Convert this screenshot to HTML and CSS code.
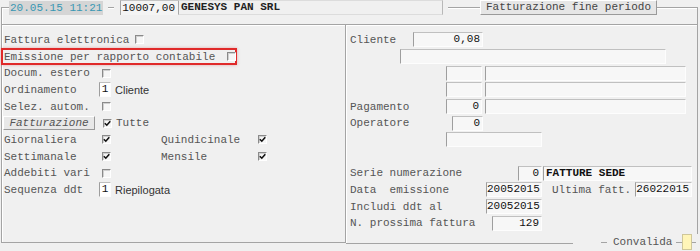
FILE: index.html
```html
<!DOCTYPE html>
<html lang="it">
<head>
    <meta charset="UTF-8">
    <title>Fatturazione fine periodo</title>
    <link rel="stylesheet" href="styles.css">
</head>
<body>
    <div class="window">
        <div class="head">
            <div class="head-row">
                <span class="line w8"></span>
                <span class="date">20.05.15 11:21</span>
                <span class="hide w5"></span><span class="line w6"></span><span class="hide w6"></span>
                <span class="amount">10007,00</span>
                <span class="name">GENESYS PAN SRL</span>
                <span class="hide w5"></span>
                <span class="line w32"></span>
                <span class="title-btn">Fatturazione fine periodo</span>
                <span class="line grow"></span>
            </div>
        </div>

        <div class="panels">
            <div class="panel left">
                <div class="row"><span class="lbl auto">Fattura elettronica</span><span class="cb gap6"></span></div>
                <div class="row mark"><span class="lbl auto">Emissione per rapporto contabile</span><span class="cb gap12"></span></div>
                <div class="row"><span class="lbl">Docum. estero</span><span class="cb"></span></div>
                <div class="row"><span class="lbl short">Ordinamento</span><span class="fld one">1</span><span class="note">Cliente</span></div>
                <div class="row"><span class="lbl">Selez. autom.</span><span class="cb"></span></div>
                <div class="row">
                    <span class="btn">Fatturazione</span>
                    <span class="cb on gap8"><svg viewBox="0 0 7 7" width="7" height="7"><path d="M0.8 3.2 L2.8 5.2 L6.3 1.2" fill="none" stroke="#111" stroke-width="1.6"/></svg></span>
                    <span class="lbl auto gap4">Tutte</span>
                </div>
                <div class="row">
                    <span class="lbl">Giornaliera</span>
                    <span class="cb on"><svg viewBox="0 0 7 7" width="7" height="7"><path d="M0.8 3.2 L2.8 5.2 L6.3 1.2" fill="none" stroke="#111" stroke-width="1.6"/></svg></span>
                    <span class="lbl col2">Quindicinale</span>
                    <span class="cb on"><svg viewBox="0 0 7 7" width="7" height="7"><path d="M0.8 3.2 L2.8 5.2 L6.3 1.2" fill="none" stroke="#111" stroke-width="1.6"/></svg></span>
                </div>
                <div class="row">
                    <span class="lbl">Settimanale</span>
                    <span class="cb on"><svg viewBox="0 0 7 7" width="7" height="7"><path d="M0.8 3.2 L2.8 5.2 L6.3 1.2" fill="none" stroke="#111" stroke-width="1.6"/></svg></span>
                    <span class="lbl col2">Mensile</span>
                    <span class="cb on"><svg viewBox="0 0 7 7" width="7" height="7"><path d="M0.8 3.2 L2.8 5.2 L6.3 1.2" fill="none" stroke="#111" stroke-width="1.6"/></svg></span>
                </div>
                <div class="row"><span class="lbl">Addebiti vari</span><span class="cb"></span></div>
                <div class="row"><span class="lbl short">Sequenza ddt</span><span class="fld one">1</span><span class="note">Riepilogata</span></div>
            </div>

            <div class="panel right">
                <div class="row"><span class="lbl r-cli">Cliente</span><span class="fld w70">0,08</span></div>
                <div class="row"><span class="lbl r-50"></span><span class="fld w266"></span></div>
                <div class="row"><span class="lbl r-96"></span><span class="fld w36"></span><span class="fld w201 gap3"></span></div>
                <div class="row"><span class="lbl r-96"></span><span class="fld w36"></span><span class="fld w201 gap3"></span></div>
                <div class="row"><span class="lbl r-96">Pagamento</span><span class="fld w36">0</span><span class="fld w201 gap3"></span></div>
                <div class="row"><span class="lbl r-102">Operatore</span><span class="fld w31">0</span></div>
                <div class="row"><span class="lbl r-96"></span><span class="fld w96"></span></div>
                <div class="row"></div>
                <div class="row"><span class="lbl r-168">Serie numerazione</span><span class="fld w24">0</span><span class="fld w149 gap1 text">FATTURE SEDE</span></div>
                <div class="row">
                    <span class="lbl r-136">Data  emissione</span><span class="fld w56">20052015</span>
                    <span class="lbl r-ult">Ultima fatt.</span><span class="fld w57">26022015</span>
                </div>
                <div class="row"><span class="lbl r-136">Includi ddt al</span><span class="fld w56">20052015</span></div>
                <div class="row"><span class="lbl r-142">N. prossima fattura</span><span class="fld w50">129</span></div>

                <div class="foot">
                    <div class="caption">
                        <span class="dash"></span>
                        <span class="cap-text">Convalida</span>
                        <span class="dash"></span>
                        <span class="flag"></span>
                        <span class="dash short"></span>
                    </div>
                </div>
            </div>
        </div>
    </div>
</body>
</html>
```

FILE: styles.css
```css
body {
    margin: 0;
    background-color: #f0f0f0;
    font-family: "Liberation Mono", "Courier New", monospace;
    font-size: 11px;
    color: #555;
}
.window {
    width: 700px;
    height: 251px;
    overflow: hidden;
}

/* header strip on the frame's top edge */
.head {
    margin: 7px 2px 0 1px;
    height: 16px;
    border: 1px solid #a4a4a4;
    border-bottom: none;
    box-shadow: inset 1px 1px 0 #fff;
}
.head-row {
    display: flex;
    align-items: center;
    height: 15px;
    margin: -8px 0 0 -1px;
}
.line { height: 15px; }
.hide { height: 15px; background-color: #f0f0f0; }
.w5 { width: 5px; }
.w6 { width: 6px; }
.w8 { width: 8px; }
.w32 { width: 32px; }
.grow { flex: 1; }
.date {
    width: 94px;
    height: 14px;
    line-height: 14px;
    padding-left: 1px;
    box-sizing: border-box;
    background-color: #d5d5d5;
    color: #3797b3;
    white-space: pre;
}
.amount {
    width: 58px;
    height: 15px;
    line-height: 14px;
    box-sizing: border-box;
    padding-right: 3px;
    text-align: right;
    background-color: #f4f4f4;
    border-left: 1px solid #a8a8a8;
    border-top: 1px solid #c4c4c4;
    color: #111;
}
.name {
    width: 265px;
    height: 15px;
    line-height: 13px;
    box-sizing: border-box;
    padding-left: 2px;
    background-color: #f0f0f0;
    border: 1px solid #dcdcdc;
    border-left-color: #a8a8a8;
    border-right-color: #b8b8b8;
    font-weight: bold;
    color: #222;
}
.title-btn {
    width: 177px;
    height: 15px;
    line-height: 13px;
    box-sizing: border-box;
    text-align: center;
    background-color: #e6e6e6;
    border: 1px solid #fff;
    border-right-color: #9a9a9a;
    border-bottom-color: #9a9a9a;
    color: #444;
}

/* main panels */
.panels {
    display: flex;
    margin-left: 1px;
    width: 697px;
    height: 220px;
}
.panel {
    display: flex;
    flex-direction: column;
    box-sizing: border-box;
    padding-top: 6.67px;
    border: 1px solid #a4a4a4;
    box-shadow: inset 1px 1px 0 #fff;
}
.left {
    width: 345px;
    height: 219px;
    padding-left: 2px;
}
.right {
    flex: 1;
    border-left: none;
    padding-left: 4px;
}
.row {
    display: flex;
    align-items: center;
    height: 16.67px;
    flex-shrink: 0;
    white-space: pre;
}
.mark {
    margin-left: -3px;
    padding-left: 1px;
    width: 236px;
    box-sizing: border-box;
    border: 2px solid #e02a2a;
    box-shadow: 0 0 3px rgba(200, 40, 40, 0.35);
}
.lbl { width: 98px; flex-shrink: 0; }
.lbl.short { width: 95px; }
.lbl.auto { width: auto; }
.lbl.col2 { width: 97px; margin-left: 50px; }
.gap1 { margin-left: 1px; }
.gap3 { margin-left: 3px; }
.gap4 { margin-left: 4px; }
.gap6 { margin-left: 6px; }
.gap8 { margin-left: 8px; }
.gap12 { margin-left: 12px; }

.cb {
    display: flex;
    align-items: center;
    justify-content: center;
    width: 9px;
    height: 9px;
    box-sizing: border-box;
    background-color: #f6f6f6;
    border-top: 1px solid #8a8a8a;
    border-left: 1px solid #8a8a8a;
    border-right: 1px solid #fff;
    border-bottom: 1px solid #fff;
    box-shadow: inset 1px 1px 0 #d0d0d0;
    flex-shrink: 0;
}
.cb svg { display: block; }

.fld {
    height: 15px;
    line-height: 13px;
    box-sizing: border-box;
    padding-right: 2px;
    text-align: right;
    background-color: #f7f7f7;
    border-top: 1px solid #c0c0c0;
    border-left: 1px solid #9e9e9e;
    border-right: 1px solid #fdfdfd;
    border-bottom: 1px solid #fdfdfd;
    color: #111;
    flex-shrink: 0;
}
.fld.one {
    width: 12px;
    padding: 0;
    text-align: center;
    background-color: #fff;
}
.fld.text {
    text-align: left;
    padding-left: 2px;
    font-weight: bold;
}
.note {
    margin-left: 4px;
    font-family: "Liberation Sans", Arial, sans-serif;
    font-size: 11px;
    color: #333;
}
.btn {
    margin-left: -1px;
    width: 92px;
    height: 14px;
    line-height: 12px;
    box-sizing: border-box;
    text-align: center;
    font-style: italic;
    background-color: #e8e8e8;
    border: 1px solid #fff;
    border-right-color: #9a9a9a;
    border-bottom-color: #9a9a9a;
    color: #555;
}

/* right panel columns */
.r-cli { width: 63px; }
.r-50 { width: 50px; }
.r-96 { width: 96px; }
.r-102 { width: 102px; }
.r-136 { width: 136px; }
.r-142 { width: 142px; }
.r-168 { width: 168px; }
.r-ult { width: 83px; margin-left: 10px; }
.w24 { width: 24px; }
.w31 { width: 31px; }
.w36 { width: 36px; }
.w50 { width: 50px; }
.w56 { width: 56px; }
.w57 { width: 57px; }
.w70 { width: 70px; }
.w96 { width: 96px; }
.w149 { width: 149px; }
.w201 { width: 201px; }
.w266 { width: 266px; }

.foot {
    display: flex;
    justify-content: flex-end;
    margin-top: auto;
    margin-bottom: -7px;
    margin-right: -1px;
    height: 16px;
}
.caption {
    display: flex;
    align-items: center;
    width: 125px;
    padding-left: 28px;
    box-sizing: border-box;
    background-color: #f0f0f0;
}
.dash {
    width: 6px;
    height: 0;
    margin-top: 1px;
    border-top: 1px solid #a4a4a4;
    flex-shrink: 0;
}
.dash.short { width: 4px; }
.cap-text {
    margin: 0 4px 0 6px;
    color: #555;
    flex-shrink: 0;
}
.flag {
    width: 10px;
    height: 16px;
    box-sizing: border-box;
    flex-shrink: 0;
    background-color: #fff5b8;
    border: 1px solid #cfc79a;
}
```
